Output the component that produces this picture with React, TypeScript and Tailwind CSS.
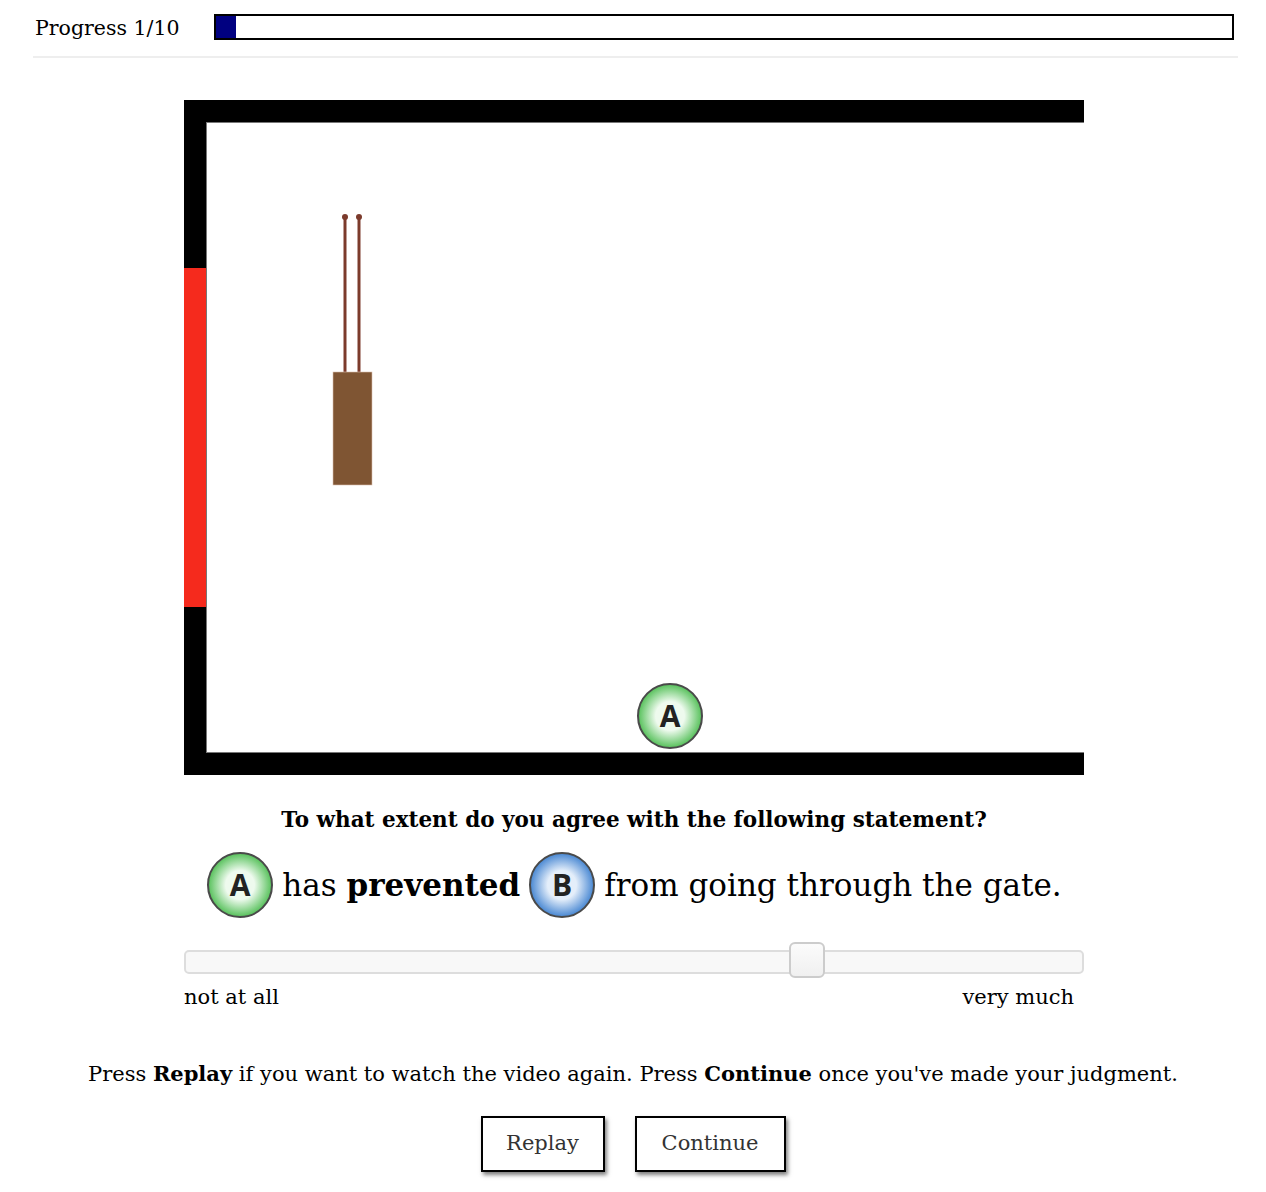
import React from 'react';

const Ball: React.FC<{ letter: string; color: 'green' | 'blue'; size?: number }> = ({ letter, color, size = 68 }) => {
  const id = `grad-${color}-${letter}`;
  const inner = color === 'green' ? '#eefaee' : '#e4eefa';
  const outer = color === 'green' ? '#55c059' : '#4686d2';
  return (
    <svg width={size} height={size} viewBox="0 0 68 68" className="shrink-0">
      <defs>
        <radialGradient id={id} cx="50%" cy="50%" r="50%">
          <stop offset="0%" stopColor={inner} />
          <stop offset="45%" stopColor={inner} />
          <stop offset="100%" stopColor={outer} />
        </radialGradient>
      </defs>
      <circle cx="34" cy="34" r="32" fill={`url(#${id})`} stroke="#4a4a4a" strokeWidth="2" />
      <text
        x="34"
        y="45"
        textAnchor="middle"
        fontFamily="'Open Sans', 'DejaVu Sans', sans-serif"
        fontWeight="700"
        fontSize="30"
        fill="#222"
      >
        {letter}
      </text>
    </svg>
  );
};

const Scene: React.FC = () => (
  <svg width="900" height="675" viewBox="0 0 900 675" className="block">
    <rect x="0" y="0" width="900" height="675" fill="#fff" />
    <rect x="0" y="0" width="900" height="22" fill="#000" />
    <rect x="0" y="0" width="22" height="675" fill="#000" />
    <rect x="0" y="653" width="900" height="22" fill="#000" />
    <line x1="22.5" y1="22" x2="22.5" y2="653" stroke="#777" strokeWidth="1" />
    <line x1="22" y1="22.5" x2="900" y2="22.5" stroke="#777" strokeWidth="1" />
    <line x1="22" y1="652.5" x2="900" y2="652.5" stroke="#777" strokeWidth="1" />
    <rect x="0" y="168" width="22" height="339" fill="#f52a1d" />
    <line x1="161" y1="117" x2="161" y2="272" stroke="#7c3b2c" strokeWidth="3" />
    <line x1="175" y1="117" x2="175" y2="272" stroke="#7c3b2c" strokeWidth="3" />
    <circle cx="161" cy="117" r="3" fill="#7c3b2c" />
    <circle cx="175" cy="117" r="3" fill="#7c3b2c" />
    <rect x="149" y="272" width="39" height="113" fill="#7f5533" stroke="#d9bfb0" strokeWidth="0.6" />
    <g transform="translate(452 582)">
      <Ball letter="A" color="green" />
    </g>
  </svg>
);

export default function App() {
  return (
    <div className="min-h-[1192px] bg-white font-['DejaVu_Serif',serif] text-black">
      <header className="ml-[33px] mr-[28px] flex h-[58px] items-start border-b-2 border-[#eeeeee]">
        <span className="ml-[2px] mt-[13px] w-[179px] text-[20.5px] leading-[30px]">Progress 1/10</span>
        <div className="mt-[14px] h-[26px] w-[1020px] border-2 border-black">
          <div className="h-full w-[20px] bg-[#000080]" />
        </div>
      </header>

      <main className="ml-[184px] mt-[42px] flex w-[900px] flex-col">
        <Scene />

        <p className="mt-[30px] text-center text-[21.5px] font-bold leading-[30px]">
          To what extent do you agree with the following statement?
        </p>

        <div className="mt-[16px] flex items-center justify-center gap-[8px] whitespace-nowrap text-[31px] leading-[48px]">
          <Ball letter="A" color="green" />
          <span>
            has <b>prevented</b>
          </span>
          <Ball letter="B" color="blue" />
          <span>from going through the gate.</span>
        </div>

        <div className="relative mt-[31px] h-[24px] rounded-[5px] border-2 border-[#dddddd] bg-[#f8f8f8]">
          <div className="absolute left-[603px] top-[-10px] h-[36px] w-[36px] rounded-[6px] border-2 border-[#cccccc] bg-gradient-to-b from-[#fbfbfb] to-[#f0f0f0]" />
        </div>

        <div className="mt-[8px] flex justify-between pr-[10px] text-[21px] leading-[30px]">
          <span>not at all</span>
          <span>very much</span>
        </div>
      </main>

      <p className="mt-[47px] text-center text-[21px] leading-[30px]">
        Press <b>Replay</b> if you want to watch the video again. Press <b>Continue</b> once you've made your judgment.
      </p>

      <div className="mt-[27px] flex justify-center gap-[30px]">
        <button className="h-[56px] w-[124px] border-2 border-black bg-white text-[21px] text-[#333] shadow-[2px_3px_4px_rgba(0,0,0,0.5)]">
          Replay
        </button>
        <button className="h-[56px] w-[151px] border-2 border-black bg-white text-[21px] text-[#333] shadow-[2px_3px_4px_rgba(0,0,0,0.5)]">
          Continue
        </button>
      </div>
    </div>
  );
}
